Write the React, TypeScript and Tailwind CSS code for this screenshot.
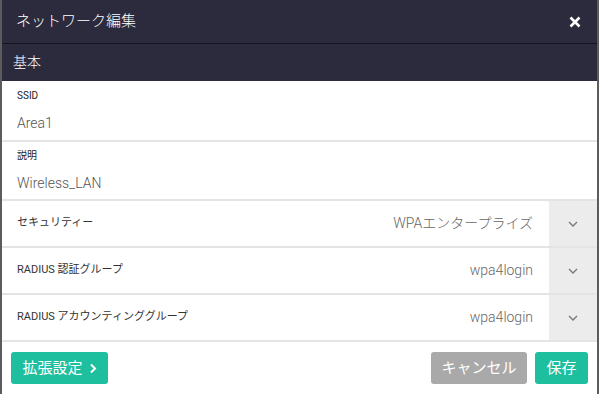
import React from "react";

const Chevron = () => (
  <svg width="10" height="6" viewBox="0 0 10 6" fill="none">
    <path d="M1 1l4 4 4-4" stroke="#777" strokeWidth="1.3" />
  </svg>
);

const SelectRow = ({ label, value }: { label: string; value: string }) => (
  <div className="flex h-[47px] border-b-2 border-[#e4e4e4]">
    <div className="flex flex-1 items-center justify-between pl-[15px] pr-[16px]">
      <span className="text-[11px] text-[#333]">{label}</span>
      <span className="text-[14px] font-light text-[#666]">{value}</span>
    </div>
    <div className="flex w-[48px] items-center justify-center bg-[#ececec]">
      <Chevron />
    </div>
  </div>
);

export default function App() {
  return (
    <div
      className="flex h-[394px] w-[599px] flex-col overflow-hidden border-x-2 border-[#5c5c5c] bg-white"
      style={{ fontFamily: 'Roboto, "Noto Sans CJK JP", sans-serif' }}
    >
      <div className="flex h-[44px] items-center justify-between border-b border-[#15141f] bg-[#2c2b3e] pl-[14px] pr-[16px]">
        <span className="text-[15px] font-light text-white">ネットワーク編集</span>
        <svg width="12" height="12" viewBox="0 0 12 12">
          <path d="M1.5 1.5l9 9M10.5 1.5l-9 9" stroke="white" strokeWidth="2.6" />
        </svg>
      </div>
      <div className="flex h-[37px] items-center bg-[#2c2b3e] pl-[11px]">
        <span className="text-[14px] font-light text-white">基本</span>
      </div>
      <div className="flex h-[61px] flex-col border-b-2 border-[#e4e4e4] pl-[15px] pt-[8px]">
        <span className="text-[10px] leading-[14px] text-[#222]">SSID</span>
        <span className="mt-[11px] text-[14px] font-light leading-[18px] text-[#555]">Area1</span>
      </div>
      <div className="flex h-[59px] flex-col border-b-2 border-[#e4e4e4] pl-[15px] pt-[7px]">
        <span className="text-[10px] leading-[14px] text-[#222]">説明</span>
        <span className="mt-[11px] text-[14px] font-light leading-[18px] text-[#555]">Wireless_LAN</span>
      </div>
      <SelectRow label="セキュリティー" value="WPAエンタープライズ" />
      <SelectRow label="RADIUS 認証グループ" value="wpa4login" />
      <SelectRow label="RADIUS アカウンティンググループ" value="wpa4login" />
      <div className="flex flex-1 items-start justify-between pl-[9px] pr-[9px] pt-[10px]">
        <button className="flex h-[32px] w-[97px] items-center justify-center gap-[6px] rounded-[3px] bg-[#1ebf9f] text-[15px] text-white">
          拡張設定
          <svg width="8" height="11" viewBox="0 0 8 11">
            <path d="M2 1.5l4 4-4 4" stroke="white" strokeWidth="2" fill="none" />
          </svg>
        </button>
        <div className="flex gap-[8px]">
          <button className="flex h-[32px] w-[96px] items-center justify-center rounded-[3px] bg-[#a9a9a9] text-[15px] text-white">
            キャンセル
          </button>
          <button className="flex h-[32px] w-[53px] items-center justify-center rounded-[3px] bg-[#1ebf9f] text-[15px] text-white">
            保存
          </button>
        </div>
      </div>
    </div>
  );
}
